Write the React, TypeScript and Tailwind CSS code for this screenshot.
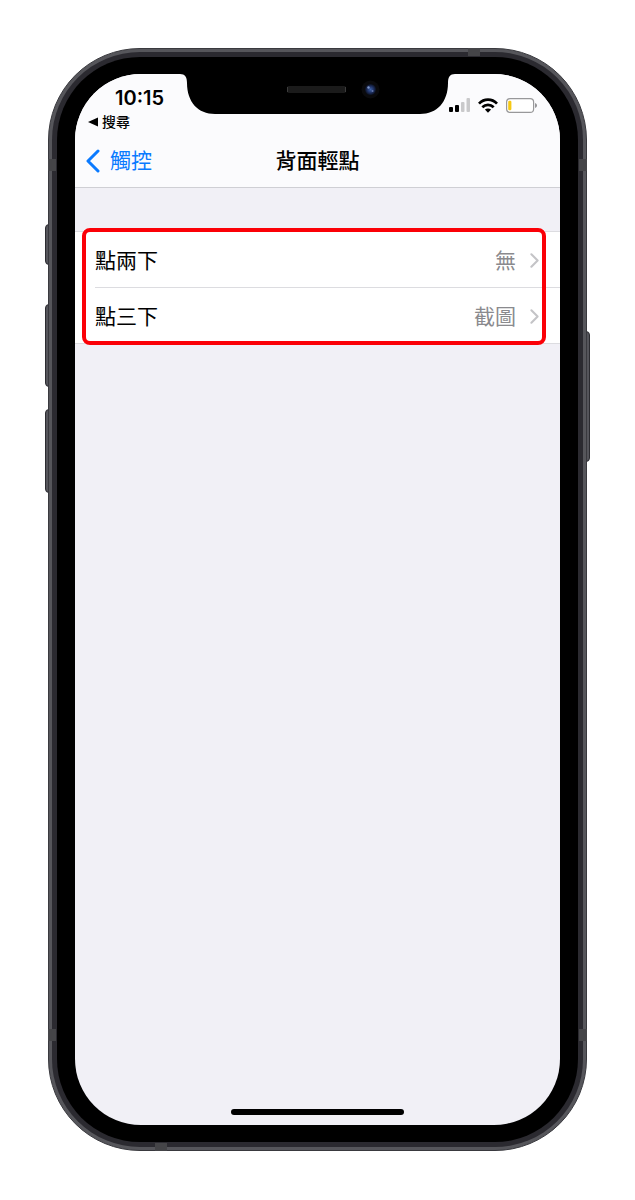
import { ChevronRight } from 'lucide-react'

const rows = [
  { id: 'double', label: '點兩下', value: '無' },
  { id: 'triple', label: '點三下', value: '截圖' },
]

function Notch() {
  return (
    <div className="pointer-events-none absolute inset-x-0 top-0 flex justify-center">
      <svg width="275" height="40" viewBox="0 0 275 40" aria-hidden="true">
        <defs>
          <radialGradient id="lens">
            <stop offset="0" stopColor="#3f62a5" />
            <stop offset="0.5" stopColor="#22366c" />
            <stop offset="1" stopColor="#0b1020" />
          </radialGradient>
        </defs>
        <path d="M0 0C5 0 7 3 7 9C7 28 18 40 35 40H240C257 40 268 28 268 9C268 3 270 0 275 0Z" fill="#000" />
        <rect x="107" y="12" width="59" height="7" rx="2" fill="#1b1b1b" />
        <path d="M107.500 13v5M165.500 13v5" stroke="#3c3c3c" strokeWidth="1" />
        <circle cx="190.500" cy="15.500" r="9" fill="#0a0a0c" />
        <circle cx="190.500" cy="15.500" r="5.500" fill="url(#lens)" />
        <circle cx="188.500" cy="13.500" r="1.200" fill="#7d95c8" />
        <circle cx="192.500" cy="17" r="1" fill="#6478ad" />
      </svg>
    </div>
  )
}

function StatusIcons() {
  return (
    <div className="flex items-start gap-2 pt-3">
      <svg width="21" height="14" viewBox="0 0 21 14" aria-label="訊號">
        <rect x="0" y="9" width="4" height="5" rx="1" fill="#000" />
        <rect x="6" y="7" width="4" height="7" rx="1" fill="#000" />
        <rect x="12" y="4" width="3.500" height="10" rx="1" fill="#c9c9cb" />
        <rect x="17.500" y="0" width="3.500" height="14" rx="1" fill="#c9c9cb" />
      </svg>
      <svg width="20" height="15" viewBox="0 0 20 15" fill="none" stroke="#000" strokeWidth="2.700" aria-label="Wi-Fi">
        <path d="M1 5.600C6 .2 14 .2 19 5.600" />
        <path d="M4.300 9.200C7.600 6 12.400 6 15.700 9.200" />
        <path d="M10 14.800L6.900 11.600C8.700 10.100 11.300 10.100 13.100 11.600Z" fill="#000" stroke="none" />
      </svg>
      <svg width="31" height="15" viewBox="0 0 31 15" aria-label="電量">
        <rect x="0.600" y="0.600" width="27" height="13.800" rx="3.500" fill="#fff" stroke="#98989a" strokeWidth="1.200" />
        <rect x="2.200" y="2.800" width="3.200" height="9.400" rx="1.200" fill="#f6c915" />
        <path d="M29 5v5c1.300-.4 2-1.300 2-2.500S30.300 5.400 29 5Z" fill="#98989a" />
      </svg>
    </div>
  )
}

function Header() {
  return (
    <header className="border-b border-[#cfcfd4] bg-[#fbfbfd]">
      <div className="flex justify-between pl-[13px] pr-[23px] pt-3">
        <div>
          <div className="pl-[27px] text-[20px] font-semibold leading-6">10:15</div>
          <a href="#search" className="flex items-center gap-1 text-[14px] font-medium leading-6">
            <svg width="10" height="10" viewBox="0 0 10 10" aria-hidden="true">
              <path d="M0 5L10 0.500V9.500Z" fill="#000" />
            </svg>
            搜尋
          </a>
        </div>
        <StatusIcons />
      </div>
      <nav className="grid h-[53px] grid-cols-3 items-center">
        <a href="#touch" className="flex items-center gap-2.5 pl-[11px] text-[21px] text-[#0a7aff]">
          <svg
            width="14"
            height="24"
            viewBox="0 0 14 24"
            fill="none"
            stroke="currentColor"
            strokeWidth="3"
            strokeLinecap="round"
            strokeLinejoin="round"
            aria-hidden="true"
          >
            <path d="M12 2L2 12L12 22" />
          </svg>
          觸控
        </a>
        <h1 className="text-center text-[21px] font-medium">背面輕點</h1>
      </nav>
    </header>
  )
}

function OptionList() {
  return (
    <main className="relative mt-[43px] border-y border-[#dcdce0] bg-white">
      <ul className="pl-5">
        {rows.map((row) => (
          <li key={row.id} className="border-b border-[#dcdce0] last:border-b-0">
            <button type="button" className="flex h-[55px] w-full items-center pr-[13px] pt-0.5 text-[21px]">
              <span>{row.label}</span>
              <span className="ml-auto text-[#8a8a8e]">{row.value}</span>
              <ChevronRight size={25} strokeWidth={2} className="ml-1.5 text-[#c4c4c7]" aria-hidden="true" />
            </button>
          </li>
        ))}
      </ul>
      {/* Highlight around both options */}
      <div className="pointer-events-none absolute -bottom-0.5 -top-1 left-[7px] right-[14px] rounded-lg border-4 border-[#fb0007]" />
    </main>
  )
}

export default function App() {
  return (
    <div className="flex min-h-screen flex-col bg-white px-12 pb-[49px] pt-12 font-[Inter,'Noto_Sans_CJK_TC',sans-serif] text-black">
      <div className="relative flex flex-1 flex-col">
        {/* Side buttons */}
        <div className="absolute -left-[3px] top-[176px] h-[41px] w-2 rounded-l-sm border border-[#2c2c31] bg-[#55555b]" />
        <div className="absolute -left-[3px] top-[256px] h-[83px] w-2 rounded-l-sm border border-[#2c2c31] bg-[#55555b]" />
        <div className="absolute -left-[3px] top-[361px] h-[84px] w-2 rounded-l-sm border border-[#2c2c31] bg-[#55555b]" />
        <div className="absolute -right-[3px] top-[283px] h-[131px] w-2 rounded-r-sm border border-[#2c2c31] bg-[#55555b]" />

        <div className="relative flex flex-1 flex-col rounded-[92px] border border-[#39393e] bg-[#56565b] p-[3px]">
          <div className="flex flex-1 flex-col rounded-[88px] bg-[#2b2a30] p-[5px]">
            <div className="flex flex-1 flex-col rounded-[83px] bg-black px-[18px] py-[17px]">
              <div className="relative flex flex-1 flex-col overflow-hidden rounded-[66px] bg-[#f1f0f6]">
                <Header />
                <OptionList />
                <div className="mx-auto mb-2.5 mt-auto h-1.5 w-[173px] rounded-full bg-black" />
                <Notch />
              </div>
            </div>
          </div>
          {/* Antenna bands */}
          <div className="absolute -left-px top-[110px] h-3 w-2 bg-[#454548]" />
          <div className="absolute -right-px top-[110px] h-3 w-2 bg-[#454548]" />
          <div className="absolute -left-px bottom-[109px] h-3 w-2 bg-[#454548]" />
          <div className="absolute -right-px bottom-[109px] h-3 w-2 bg-[#454548]" />
          <div className="absolute -top-px right-[106px] h-2 w-3 bg-[#454548]" />
          <div className="absolute -bottom-px left-[106px] h-2 w-3 bg-[#454548]" />
        </div>
      </div>
    </div>
  )
}
